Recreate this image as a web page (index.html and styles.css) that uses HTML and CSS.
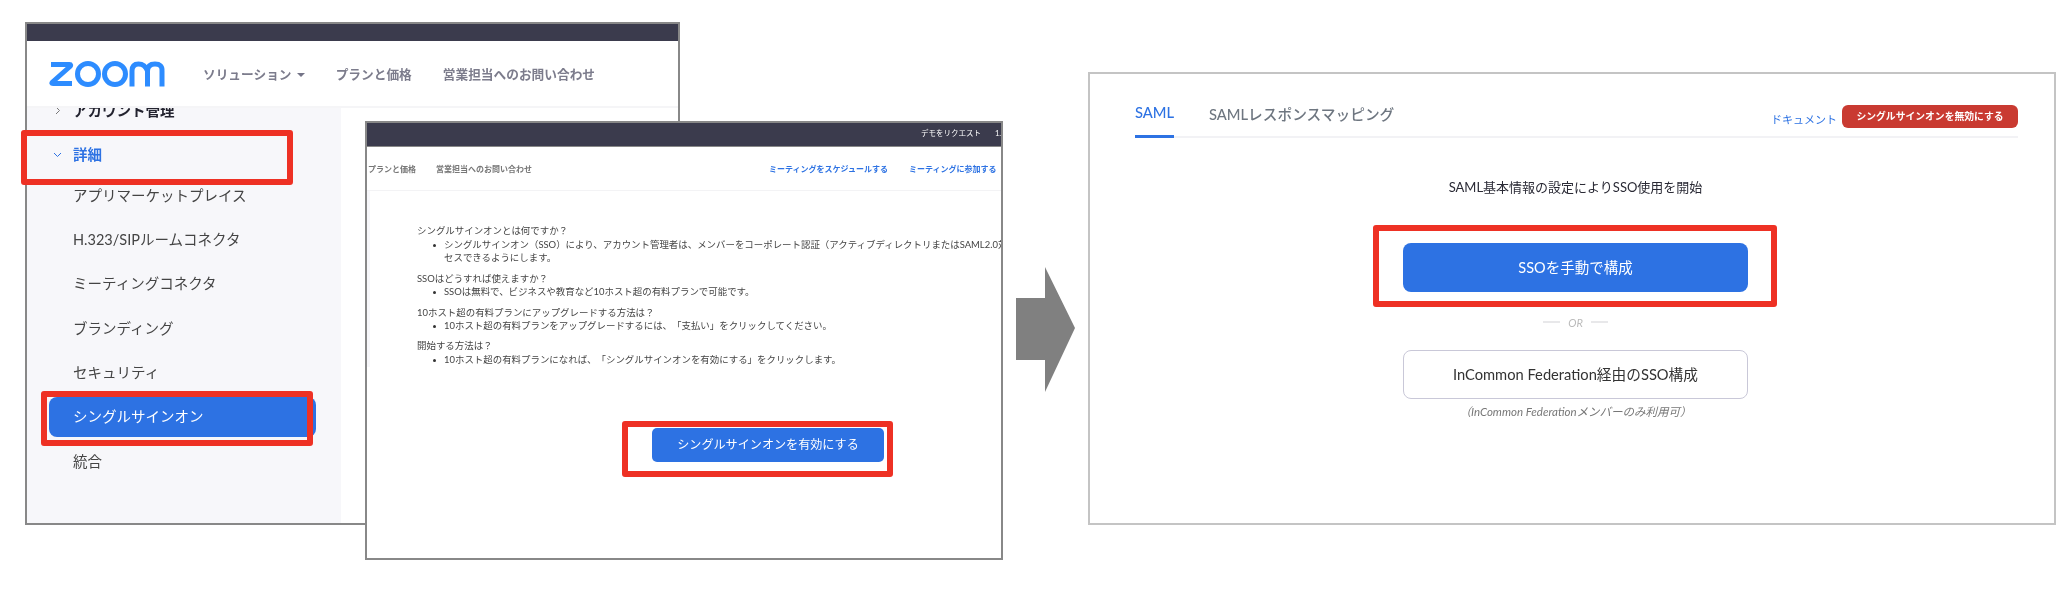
FILE: index.html
```html
<!DOCTYPE html>
<html>
	<head>
		<meta charset="utf-8" />
		<title>シングルサインオン</title>
		<link rel="stylesheet" href="styles.css">
	</head>
	<body>
		<div class="page">
			<!--左：管理画面-->
			<div class="win win1">
				<div class="darkbar"></div>
				<div class="head1">
					<svg class="logo" width="118" height="28" viewBox="0 0 118 28" fill="none" stroke="#2d8cff" stroke-width="5">
						<path d="M2 4.500H20.500Q22.500 4.500 21 6.500L3.500 22Q2 23.500 4 23.500H23" stroke-linejoin="round"/>
						<circle cx="39" cy="14" r="10.500"/>
						<circle cx="66" cy="14" r="10.500"/>
						<path d="M83 26.500V11Q83 4 89.500 4T98.500 11V26.500M98.500 11Q98.500 4 106 4T113 11V26.500"/>
					</svg>
					<span class="navitem">ソリューション <i class="caret"></i></span>
					<span class="navitem">プランと価格</span>
					<span class="navitem">営業担当へのお問い合わせ</span>
				</div>
				<div class="main1">
					<ul class="sidebar">
						<li class="top-row bold"><svg class="chev" width="9" height="9" viewBox="0 0 9 9"><path d="M3 1L6.500 4.500L3 8" fill="none" stroke="#777" stroke-width="1"/></svg>アカウント管理</li>
						<li class="top-row bold blue"><svg class="chev" width="9" height="9" viewBox="0 0 9 9"><path d="M1 3L4.500 6.500L8 3" fill="none" stroke="#2d72e3" stroke-width="1"/></svg>詳細</li>
						<li>アプリマーケットプレイス</li>
						<li>H.323/SIPルームコネクタ</li>
						<li>ミーティングコネクタ</li>
						<li>ブランディング</li>
						<li>セキュリティ</li>
						<li class="active">シングルサインオン</li>
						<li>統合</li>
					</ul>
				</div>
			</div>
			<div class="mark mark1"></div>
			<div class="mark mark2"></div>

			<!--中：有効化画面-->
			<div class="win win2">
				<div class="darkbar2"><span>デモをリクエスト</span><span class="tel">1.888.799.9666</span></div>
				<div class="head2">
					<span>プランと価格</span>
					<span>営業担当へのお問い合わせ</span>
					<span class="links">
						<a>ミーティングをスケジュールする</a>
						<a>ミーティングに参加する</a>
					</span>
				</div>
				<div class="faq">
					<p>シングルサインオンとは何ですか？</p>
					<ul>
						<li>シングルサインオン（SSO）により、アカウント管理者は、メンバーをコーポレート認証（アクティブディレクトリまたはSAML2.0対応のアイデンティティプロバイダ）でアク<br>セスできるようにします。</li>
					</ul>
					<p>SSOはどうすれば使えますか？</p>
					<ul>
						<li>SSOは無料で、ビジネスや教育など10ホスト超の有料プランで可能です。</li>
					</ul>
					<p>10ホスト超の有料プランにアップグレードする方法は？</p>
					<ul>
						<li>10ホスト超の有料プランをアップグレードするには、「支払い」をクリックしてください。</li>
					</ul>
					<p>開始する方法は？</p>
					<ul>
						<li>10ホスト超の有料プランになれば、「シングルサインオンを有効にする」をクリックします。</li>
					</ul>
				</div>
				<div class="btnrow"><span class="btn-enable">シングルサインオンを有効にする</span></div>
			</div>
			<div class="mark mark3"></div>

			<!--矢印-->
			<svg class="arrow" width="60" height="126" viewBox="0 0 60 126"><path d="M0 31H29V0L59 61L29 125V93H0Z" fill="#808080"/></svg>

			<!--右：SAML画面-->
			<div class="win win3">
				<div class="tabs">
					<span class="tab on">SAML</span>
					<span class="tab">SAMLレスポンスマッピング</span>
					<span class="tabright">
						<a class="doc">ドキュメント</a>
						<span class="btn-off">シングルサインオンを無効にする</span>
					</span>
				</div>
				<div class="setup">
					<p class="lead">SAML基本情報の設定によりSSO使用を開始</p>
					<div class="btn-big">SSOを手動で構成</div>
					<div class="or"><i></i>OR<i></i></div>
					<div class="btn-line">InCommon Federation経由のSSO構成</div>
					<p class="note">（InCommon Federationメンバーのみ利用可）</p>
				</div>
			</div>
			<div class="mark mark4"></div>
		</div>
	</body>
</html>
```

FILE: styles.css
```css
* {
	margin: 0;
	padding: 0;
	box-sizing: border-box;
	list-style: none;
}
body {
	background: #fff;
	font-family: Lato, "Noto Sans CJK JP", sans-serif;
	color: #333;
	text-spacing-trim: space-all;
}
.page {
	position: relative;
	width: 2064px;
	height: 604px;
	overflow: hidden;
}
/*ウィンドウ*/
.win {
	position: absolute;
	background: #fff;
	border: 2px solid #888;
	overflow: hidden;
	filter: blur(.3px);
}
.win1 {
	left: 25px;
	top: 22px;
	width: 655px;
	height: 503px;
	display: flex;
	flex-direction: column;
}
.win2 {
	left: 365px;
	top: 121px;
	width: 638px;
	height: 439px;
}
.win3 {
	left: 1088px;
	top: 72px;
	width: 968px;
	height: 453px;
	border-color: #c4c4c4;
	padding: 0 36px 0 45px;
}
/*赤枠*/
.mark {
	position: absolute;
	border: 6px solid #ee3124;
	border-radius: 3px;
}
.mark1 {
	left: 21px;
	top: 130px;
	width: 272px;
	height: 55px;
}
.mark2 {
	left: 41px;
	top: 391px;
	width: 272px;
	height: 55px;
}
.mark3 {
	left: 622px;
	top: 421px;
	width: 271px;
	height: 56px;
}
.mark4 {
	left: 1373px;
	top: 225px;
	width: 404px;
	height: 82px;
}
/*左*/
.darkbar {
	height: 17px;
	background: #3b3b4d;
	flex: none;
}
.head1 {
	height: 67px;
	flex: none;
	display: flex;
	align-items: center;
	padding-left: 22px;
	gap: 31px;
	border-bottom: 2px solid #f5f5f7;
	font-size: 12.700px;
	font-weight: 700;
	color: #7c7c8c;
}
.logo {
	margin-right: 5px;
}
.caret {
	display: inline-block;
	margin-left: 2px;
	border: 4px solid transparent;
	border-top-color: #747487;
	border-bottom-width: 0;
	vertical-align: 2px;
}
.main1 {
	flex: 1;
	overflow: hidden;
}
.sidebar {
	width: 314px;
	height: 100%;
	background: #f7f7fa;
	overflow: hidden;
	font-size: 14.500px;
	color: #444;
}
.sidebar li {
	height: 40px;
	line-height: 40px;
	margin-bottom: 4.300px;
	padding-left: 46px;
	white-space: nowrap;
}
.sidebar li:first-child {
	margin-top: -17.500px;
}
.sidebar li:nth-child(2) {
	margin-bottom: 1px;
}
.sidebar .top-row {
	padding-left: 26px;
	display: flex;
	align-items: center;
}
.chev {
	margin-right: 11px;
}
.bold {
	font-weight: 700;
	color: #23232f;
}
.sidebar .blue {
	color: #2d72e3;
}
.sidebar .active {
	margin-left: 22px;
	width: 267px;
	padding-left: 24px;
	background: #2d72e3;
	color: #fff;
	border-radius: 8px;
}
/*中*/
.darkbar2 {
	height: 24px;
	background: #3b3b4d;
	border-bottom: 1px solid #888;
	color: #fff;
	font-size: 7.500px;
	line-height: 22px;
	padding-left: 554px;
	white-space: nowrap;
}
.tel {
	margin-left: 14px;
}
.head2 {
	height: 44px;
	display: flex;
	align-items: center;
	padding-left: 1px;
	gap: 20px;
	font-size: 8px;
	font-weight: 700;
	color: #777;
	border-bottom: 1px solid #f3f3f5;
	white-space: nowrap;
}
.links {
	margin-left: 217px;
	display: flex;
	gap: 21px;
	color: #2d72e3;
	font-weight: 700;
}
.faq {
	padding: 33px 0 0 47px;
	border-left: 3px solid #f7f7fa;
	font-size: 9.450px;
	line-height: 13.700px;
	color: #444;
	white-space: nowrap;
}
.faq ul {
	margin-bottom: 6.500px;
	padding-left: 27px;
}
.faq li {
	position: relative;
}
.faq li::before {
	content: "";
	position: absolute;
	left: -11px;
	top: 6px;
	width: 3px;
	height: 3px;
	border-radius: 50%;
	background: #333;
}
.btnrow {
	margin-top: 61px;
	padding-left: 285px;
}
.btn-enable {
	display: block;
	width: 232px;
	height: 34px;
	line-height: 34px;
	text-align: center;
	background: #2d72e3;
	color: #fff;
	border-radius: 5px;
	font-size: 12.100px;
}
/*右*/
.tabs {
	height: 64px;
	display: flex;
	border-bottom: 2px solid #f2f2f5;
	font-size: 14.700px;
	color: #6e7680;
}
.tab {
	height: 64px;
	padding-top: 29px;
	margin-right: 35px;
	font-weight: 500;
}
.tab.on {
	color: #2d72e3;
	border-bottom: 3px solid #2d72e3;
}
.tabright {
	margin-left: auto;
	display: flex;
	align-items: flex-start;
	gap: 5px;
	padding-top: 31px;
}
.doc {
	font-size: 11px;
	color: #2d72e3;
	padding-top: 6px;
}
.btn-off {
	width: 176px;
	height: 23px;
	line-height: 23px;
	text-align: center;
	background: #c93a31;
	color: #fff;
	border-radius: 6px;
	font-size: 9.800px;
	font-weight: 700;
}
.setup {
	display: flex;
	flex-direction: column;
	align-items: center;
	padding-right: 2px;
}
.lead {
	margin-top: 39px;
	font-size: 13px;
	line-height: 20px;
	color: #2a2a35;
}
.btn-big {
	margin-top: 46px;
	width: 345px;
	height: 49px;
	line-height: 49px;
	text-align: center;
	background: #2d72e3;
	color: #fff;
	border-radius: 8px;
	font-size: 14.500px;
}
.or {
	margin-top: 21px;
	display: flex;
	align-items: center;
	gap: 8px;
	height: 18px;
	font-size: 11px;
	font-style: italic;
	color: #bbb;
}
.or i {
	width: 17px;
	height: 2px;
	background: #e8e8ea;
}
.btn-line {
	margin-top: 19px;
	width: 345px;
	height: 49px;
	line-height: 47px;
	text-align: center;
	border: 1px solid #c9c8d8;
	border-radius: 8px;
	font-size: 14.700px;
	color: #333;
}
.note {
	margin-top: 5px;
	font-size: 11.500px;
	line-height: 16px;
	font-style: italic;
	color: #777;
	text-spacing-trim: normal;
}
/*矢印*/
.arrow {
	position: absolute;
	left: 1016px;
	top: 267px;
}
```
